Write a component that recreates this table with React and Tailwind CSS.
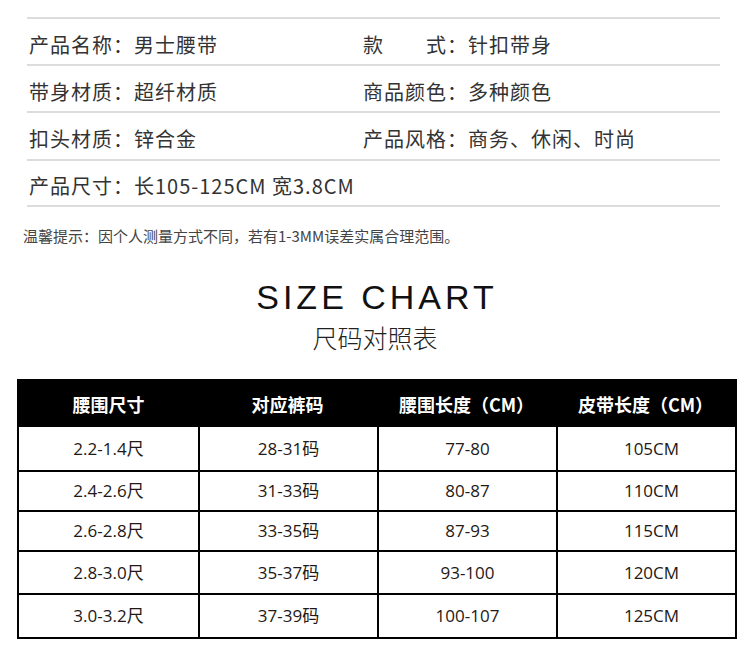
const info = [
  [['产品名称：', '男士腰带'], ['款\u3000\u3000式：', '针扣带身']],
  [['带身材质：', '超纤材质'], ['商品颜色：', '多种颜色']],
  [['扣头材质：', '锌合金'], ['产品风格：', '商务、休闲、时尚']],
  [['产品尺寸：', '长105-125CM 宽3.8CM']],
]

const rowHeights = ['h-[45px]', 'h-[40px]', 'h-[40px]', 'h-[43px]', 'h-[42px]']

const sizes = [
  ['2.2-1.4尺', '28-31码', '77-80', '105CM'],
  ['2.4-2.6尺', '31-33码', '80-87', '110CM'],
  ['2.6-2.8尺', '33-35码', '87-93', '115CM'],
  ['2.8-3.0尺', '35-37码', '93-100', '120CM'],
  ['3.0-3.2尺', '37-39码', '100-107', '125CM'],
]

const headers = ['腰围尺寸', '对应裤码', '腰围长度（CM）', '皮带长度（CM）']

const cjk = "font-['Noto_Sans_CJK_SC',sans-serif]"

const App = () => {
  return (
    <div className={`w-[750px] h-[650px] overflow-hidden bg-white ${cjk}`}>
      {/* product info */}
      <div className="ml-[27px] mt-[17px] w-[693px] border-t-2 border-[#dcdcdc]">
        {info.map((row, i) => (
          <div
            key={i}
            className={`flex items-center border-b-2 border-[#dcdcdc] pl-[2px] pt-[6px] text-[20px] tracking-[1px] text-[#333] ${
              i === 2 ? 'h-[48px]' : i === 3 ? 'h-[46px]' : 'h-[47px]'
            }`}
          >
            {row.map(([label, value], j) => (
              <div key={j} className={j === 0 ? 'w-[334px] whitespace-nowrap' : 'whitespace-nowrap'}>
                {label}
                {value}
              </div>
            ))}
          </div>
        ))}
      </div>

      <p className="mt-[19px] pl-[23px] text-[15px] leading-[20px] text-[#444]">
        温馨提示：因个人测量方式不同，若有1-3MM误差实属合理范围。
      </p>

      {/* title */}
      <h2 className="mt-[31px] text-center font-['Liberation_Sans',Arial,sans-serif] text-[34px] leading-[40px] tracking-[4px] pl-[4px] text-[#111]">
        SIZE CHART
      </h2>
      <p className="mt-[5px] text-center text-[25px] leading-[30px] font-light text-[#222]">尺码对照表</p>

      {/* size table */}
      <div className="mt-[27px] ml-[17px] w-[720px] border-2 border-black">
        <div className="grid h-[46px] grid-cols-4 bg-black text-[18px] font-bold text-white">
          {headers.map((h) => (
            <div key={h} className="flex items-center justify-center">
              {h}
            </div>
          ))}
        </div>
        {sizes.map((row, i) => (
          <div
            key={i}
            className={`grid grid-cols-4 ${rowHeights[i]} ${i < sizes.length - 1 ? 'border-b-2 border-black' : ''} font-['Open_Sans','Noto_Sans_CJK_SC',sans-serif] text-[17px] text-[#231815]`}
          >
            {row.map((cell, j) => (
              <div
                key={j}
                className={`flex items-center justify-center ${j > 0 ? 'border-l-2 border-black' : ''} ${j === 3 ? 'pl-[10px]' : ''}`}
              >
                {cell}
              </div>
            ))}
          </div>
        ))}
      </div>
    </div>
  )
}

export default App
